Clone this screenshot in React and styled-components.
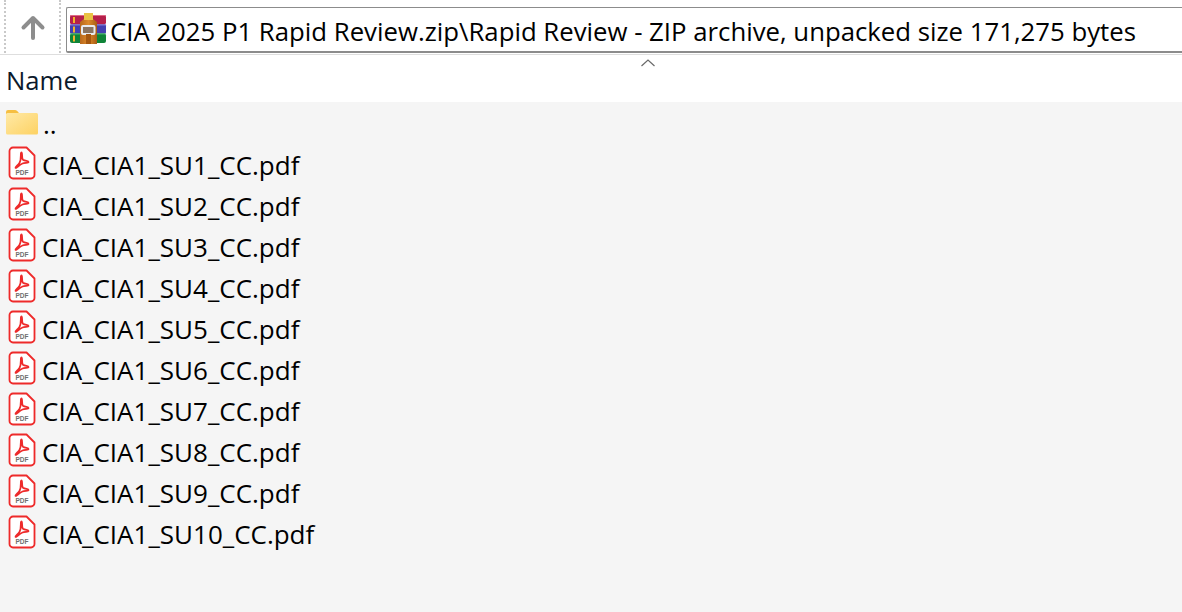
import styled, { createGlobalStyle } from "styled-components";

const files = [1, 2, 3, 4, 5, 6, 7, 8, 9, 10].map((n) => `CIA_CIA1_SU${n}_CC.pdf`);

const GlobalStyle = createGlobalStyle`
  html, body {
    margin: 0;
    padding: 0;
    background: #f5f5f5;
  }
  body {
    font-family: "Open Sans", "Noto Sans", "Liberation Sans", sans-serif;
    color: #000;
  }
`;

const Window = styled.div`
  width: 1182px;
  height: 612px;
  overflow: hidden;
  display: flex;
  flex-direction: column;
`;

const Toolbar = styled.div`
  display: flex;
  height: 55px;
  flex: none;
  background: #fff;
  border-bottom: 1px solid #dedede;
  box-sizing: border-box;
`;

const ToolButton = styled.div`
  width: 57px;
  margin-left: 4px;
  margin-bottom: 1px;
  border-left: 2px dotted #c9c9c9;
  border-right: 2px dotted #c9c9c9;
  box-sizing: border-box;
  display: flex;
  align-items: center;
  justify-content: center;
`;

const AddressBar = styled.div`
  flex: 1;
  margin: 7px 0 0 5px;
  height: 46px;
  box-sizing: border-box;
  border: 1px solid #8c8c8c;
  border-bottom-width: 2px;
  border-right: none;
  border-radius: 2px 0 0 2px;
  display: flex;
  align-items: center;
  gap: 3px;
  padding-left: 2px;
  background: #fff;
`;

const ArchiveImage = styled.div`
  display: flex;
  margin-top: -3px;
`;

const AddressText = styled.span`
  font-size: 25.75px;
  white-space: nowrap;
  margin-top: 2px;
`;

const HeaderRow = styled.div`
  position: relative;
  height: 47px;
  flex: none;
  background: #fff;
  display: flex;
  align-items: center;
  padding: 4px 0 0 6px;
  box-sizing: border-box;
  font-size: 25.7px;
  color: #0c1a2c;
`;

const SortCaret = styled.svg`
  position: absolute;
  left: 640px;
  top: 3px;
`;

const List = styled.div`
  flex: 1;
  background: #f5f5f5;
  padding-top: 1px;
`;

const Row = styled.div`
  height: 41px;
  display: flex;
  align-items: center;
  gap: ${(p) => p.$gap}px;
  padding-left: ${(p) => p.$pad}px;
  font-size: 26px;
  white-space: nowrap;
`;

const RowImage = styled.div`
  display: flex;
  margin-top: -4px;
`;

const UpArrow = () => (
  <svg width="26" height="26" viewBox="0 0 26 26" fill="none">
    <path d="M13 24V4M3.500 13.500 13 4l9.500 9.500" stroke="#8d8d8d" strokeWidth="4" strokeLinecap="round" strokeLinejoin="round" />
  </svg>
);

const RarIcon = () => (
  <svg width="38" height="32" viewBox="0 0 38 32">
    <defs>
      <linearGradient id="belt" x1="0" y1="0" x2="1" y2="0">
        <stop offset="0" stopColor="#b8681c" />
        <stop offset="0.5" stopColor="#dd8a2a" />
        <stop offset="1" stopColor="#a85c16" />
      </linearGradient>
    </defs>
    <rect x="1" y="3" width="36" height="9.500" rx="2" fill="#b5204b" />
    <rect x="1" y="12.500" width="36" height="9" rx="1" fill="#4440b0" />
    <rect x="1" y="21.500" width="36" height="9.500" rx="2" fill="#0f8438" />
    <rect x="1" y="3" width="36" height="1" rx="0.500" fill="#e06a86" />
    <rect x="1" y="12.500" width="36" height="1" fill="#7f7bd6" />
    <rect x="1" y="21.500" width="36" height="1" fill="#44b56a" />
    <rect x="4" y="5" width="2" height="6" fill="#f2b62a" />
    <rect x="4" y="14.500" width="2" height="6" fill="#f2b62a" />
    <rect x="4" y="23.500" width="2" height="6" fill="#f2b62a" />
    <path d="M15 1h9v6l4 3v22H11V10l4-3z" fill="url(#belt)" />
    <rect x="15" y="1" width="9" height="7" fill="#e9c244" />
    <rect x="13" y="14" width="12.500" height="8" rx="1" fill="#8a7460" stroke="#e8ebee" strokeWidth="2" />
    <rect x="17" y="22" width="5" height="10" fill="#a4570f" />
  </svg>
);

const FolderIcon = () => (
  <svg width="34" height="26" viewBox="0 0 34 26">
    <defs>
      <linearGradient id="folderFill" x1="0" y1="0" x2="1" y2="1">
        <stop offset="0" stopColor="#ffe9a6" />
        <stop offset="1" stopColor="#fdd263" />
      </linearGradient>
    </defs>
    <path d="M1 3a2 2 0 0 1 2-2h7c1.500 0 2.500 1 3.500 2.500L15 5H1z" fill="#f6bf42" />
    <rect x="1" y="4" width="32" height="21.500" rx="1.500" fill="url(#folderFill)" />
  </svg>
);

const PdfIcon = () => (
  <svg width="28" height="34" viewBox="0 0 28 34" fill="none">
    <path
      d="M5 1.500h13.500L26.500 9.500V29a3.500 3.500 0 0 1-3.500 3.500H5A3.500 3.500 0 0 1 1.500 29V5A3.500 3.500 0 0 1 5 1.500Z"
      fill="#fff"
      stroke="#ee2a2a"
      strokeWidth="1.800"
      strokeLinejoin="round"
    />
    <path
      d="M13.500 6.500c-1.500 0 .5 6-2 10.500-1.500 2.600-4.500 3.800-4 4.800.6 1 3.600-3 7-4.300 2.500-.9 6-.4 6-1.500s-3.500-.8-5.500-2.300c-1.600-1.400-.4-7.200-1.500-7.200Z"
      stroke="#ee2a2a"
      strokeWidth="1.800"
      strokeLinejoin="round"
    />
    <text x="14" y="29" textAnchor="middle" fontSize="6.500" fontWeight="700" fontFamily="Liberation Sans, sans-serif" fill="#6e6e6e">PDF</text>
  </svg>
);

export default function App() {
  return (
    <>
      <GlobalStyle />
      <Window>
        <Toolbar>
          <ToolButton>
            <UpArrow />
          </ToolButton>
          <AddressBar>
            <ArchiveImage>
              <RarIcon />
            </ArchiveImage>
            <AddressText>CIA 2025 P1 Rapid Review.zip\Rapid Review - ZIP archive, unpacked size 171,275 bytes</AddressText>
          </AddressBar>
        </Toolbar>
        <HeaderRow>
          Name
          <SortCaret width="16" height="10" viewBox="0 0 16 10" fill="none">
            <path d="M1.500 8 8 2l6.500 6" stroke="#6a6a6a" strokeWidth="1.200" />
          </SortCaret>
        </HeaderRow>
        <List>
          <Row $pad={5} $gap={4}>
            <RowImage>
              <FolderIcon />
            </RowImage>
            ..
          </Row>
          {files.map((name) => (
            <Row key={name} $pad={8} $gap={6}>
              <RowImage>
                <PdfIcon />
              </RowImage>
              {name}
            </Row>
          ))}
        </List>
      </Window>
    </>
  );
}
